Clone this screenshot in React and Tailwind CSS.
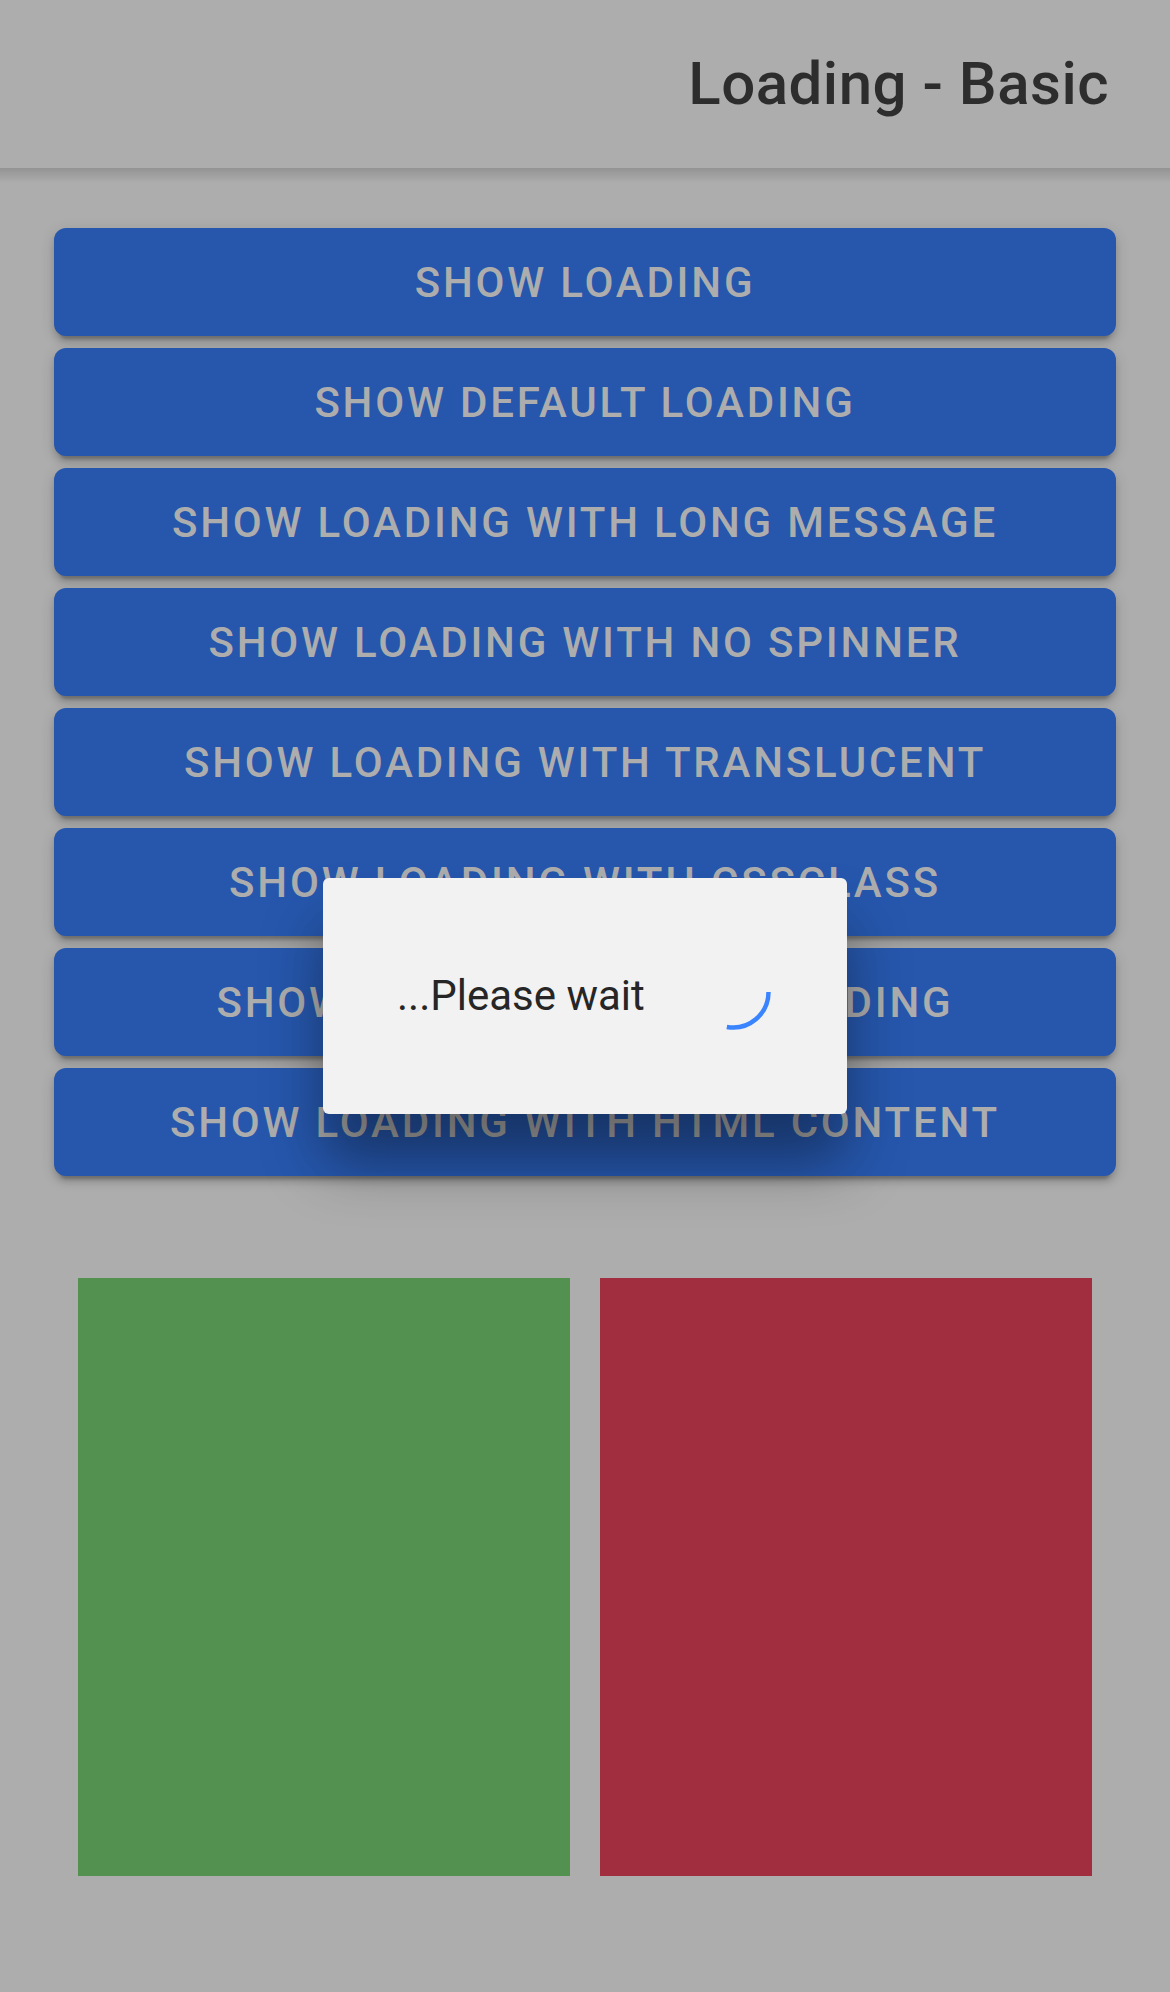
import React from 'react';

const buttons = [
  'Show Loading',
  'Show Default Loading',
  'Show Loading with long message',
  'Show Loading with no spinner',
  'Show Loading with translucent',
  'Show Loading with cssClass',
  'Show Backdrop Click Loading',
  'Show Loading with HTML content',
];

const Spinner = () => (
  <svg width="84" height="84" viewBox="0 0 84 84" className="shrink-0">
    <path
      d="M77.5 38 A35.5 35.5 0 0 1 35.84 72.96"
      fill="none"
      stroke="#3a84ff"
      strokeWidth="4.5"
    />
  </svg>
);

export default function App() {
  return (
    <div className="relative min-h-[1992px] bg-[#adadad] font-['Roboto',sans-serif]">
      {/* toolbar */}
      <header className="relative flex h-[168px] items-center justify-end px-[61px]">
        <h1 className="text-[60px] font-medium leading-none tracking-[0.5px] text-[#2d2d2d]">Loading - Basic</h1>
        <div className="absolute left-0 right-0 top-full h-[15px] bg-gradient-to-b from-black/15 to-transparent" />
      </header>

      <main className="px-[54px] pt-[60px]">
        <div className="flex flex-col gap-[12px]">
          {buttons.map((label, i) => (
            <button
              key={i}
              type="button"
              className="flex h-[108px] w-full items-center justify-center rounded-[12px] bg-[#2657ad] text-[42px] font-medium uppercase tracking-[2.8px] text-[#adadad] shadow-[0_9px_3px_-6px_rgba(0,0,0,0.2),0_6px_6px_0_rgba(0,0,0,0.14),0_3px_15px_0_rgba(0,0,0,0.12)]"
            >
              {label}
            </button>
          ))}
        </div>

        <div className="mt-[102px] flex gap-[30px] px-[24px]">
          <div className="h-[598px] w-[492px] bg-[#529150]" />
          <div className="h-[598px] w-[492px] bg-[#a12e3e]" />
        </div>
      </main>

      {/* loading overlay */}
      <div className="absolute inset-0 flex items-center justify-center">
        <div className="flex h-[236px] w-[524px] items-center justify-between rounded-[6px] bg-[#f2f2f2] pl-[74px] pr-[72px] shadow-[0_48px_60px_rgba(0,0,0,0.4)]">
          <span className="text-[42px] leading-none text-[#262626]">...Please wait</span>
          <Spinner />
        </div>
      </div>
    </div>
  );
}
